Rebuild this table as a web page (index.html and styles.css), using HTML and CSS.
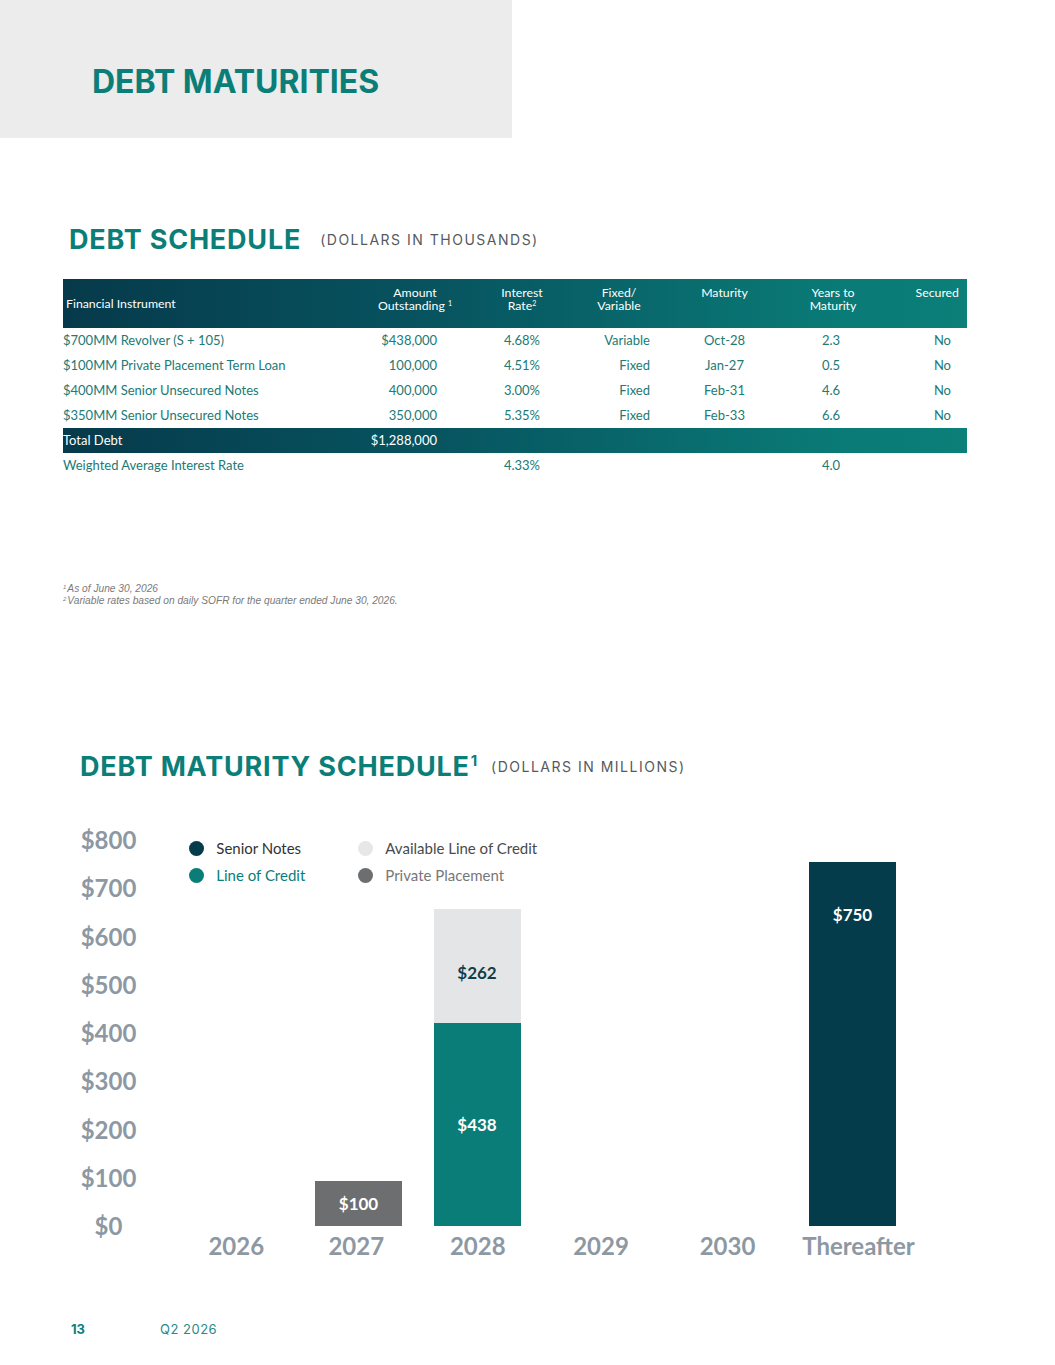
FILE: index.html
```html
<!DOCTYPE html>
<html lang="en">
<head>
<meta charset="utf-8">
<title>Debt Maturities</title>
<link rel="stylesheet" href="styles.css">
</head>
<body>
<header class="hero">
  <h1 class="hero-title">DEBT MATURITIES</h1>
</header>
<main class="page">
  <section class="schedule">
    <div class="section-head">
      <h2 class="section-title">DEBT SCHEDULE</h2>
      <span class="section-unit">(DOLLARS IN THOUSANDS)</span>
    </div>
    <table class="debt-table">
      <colgroup>
        <col class="w-inst"><col class="w-amt"><col class="w-rate"><col class="w-type"><col class="w-mat"><col class="w-yrs"><col class="w-sec">
      </colgroup>
      <thead>
        <tr class="band">
          <th class="h-inst">Financial Instrument</th>
          <th>Amount<br>Outstanding <sup class="h-sup">1</sup></th>
          <th>Interest<br>Rate<sup class="h-sup">2</sup></th>
          <th>Fixed/<br>Variable</th>
          <th>Maturity</th>
          <th>Years to<br>Maturity</th>
          <th class="h-sec">Secured</th>
        </tr>
      </thead>
      <tbody>
        <tr>
          <td class="d-inst">$700MM Revolver (S + 105)</td>
          <td class="d-amt">$438,000</td>
          <td class="d-rate">4.68%</td>
          <td class="d-type">Variable</td>
          <td class="d-mat">Oct-28</td>
          <td class="d-yrs">2.3</td>
          <td class="d-sec">No</td>
        </tr>
        <tr>
          <td class="d-inst">$100MM Private Placement Term Loan</td>
          <td class="d-amt">100,000</td>
          <td class="d-rate">4.51%</td>
          <td class="d-type">Fixed</td>
          <td class="d-mat">Jan-27</td>
          <td class="d-yrs">0.5</td>
          <td class="d-sec">No</td>
        </tr>
        <tr>
          <td class="d-inst">$400MM Senior Unsecured Notes</td>
          <td class="d-amt">400,000</td>
          <td class="d-rate">3.00%</td>
          <td class="d-type">Fixed</td>
          <td class="d-mat">Feb-31</td>
          <td class="d-yrs">4.6</td>
          <td class="d-sec">No</td>
        </tr>
        <tr>
          <td class="d-inst">$350MM Senior Unsecured Notes</td>
          <td class="d-amt">350,000</td>
          <td class="d-rate">5.35%</td>
          <td class="d-type">Fixed</td>
          <td class="d-mat">Feb-33</td>
          <td class="d-yrs">6.6</td>
          <td class="d-sec">No</td>
        </tr>
        <tr class="band total">
          <td class="d-inst">Total Debt</td>
          <td class="d-amt">$1,288,000</td>
          <td class="d-rate"></td>
          <td class="d-type"></td>
          <td class="d-mat"></td>
          <td class="d-yrs"></td>
          <td class="d-sec"></td>
        </tr>
        <tr>
          <td class="d-inst">Weighted Average Interest Rate</td>
          <td class="d-amt"></td>
          <td class="d-rate">4.33%</td>
          <td class="d-type"></td>
          <td class="d-mat"></td>
          <td class="d-yrs">4.0</td>
          <td class="d-sec"></td>
        </tr>
      </tbody>
    </table>
    <div class="footnotes">
      <p class="note"><sup class="note-sup">1</sup>As of June 30, 2026</p>
      <p class="note"><sup class="note-sup">2</sup>Variable rates based on daily SOFR for the quarter ended June 30, 2026.</p>
    </div>
  </section>

  <section class="maturity">
    <div class="section-head chart-head">
      <h2 class="section-title">DEBT MATURITY SCHEDULE<sup class="title-sup">1</sup></h2>
      <span class="section-unit">(DOLLARS IN MILLIONS)</span>
    </div>
    <div class="chart">
      <div class="y-axis">
        <span class="tick">$800</span>
        <span class="tick">$700</span>
        <span class="tick">$600</span>
        <span class="tick">$500</span>
        <span class="tick">$400</span>
        <span class="tick">$300</span>
        <span class="tick">$200</span>
        <span class="tick">$100</span>
        <span class="tick">$0</span>
      </div>
      <div class="plot">
        <ul class="legend">
          <li class="key"><span class="dot dot-senior"></span><span class="key-senior">Senior Notes</span></li>
          <li class="key"><span class="dot dot-avail"></span><span class="key-avail">Available Line of Credit</span></li>
          <li class="key"><span class="dot dot-loc"></span><span class="key-loc">Line of Credit</span></li>
          <li class="key"><span class="dot dot-pp"></span><span class="key-pp">Private Placement</span></li>
        </ul>
        <div class="col">
          <div class="slot"></div>
          <div class="xlabel">2026</div>
        </div>
        <div class="col">
          <div class="slot">
            <div class="bar bar-pp">
              <div class="seg seg-pp" style="height:45px">$100</div>
            </div>
          </div>
          <div class="xlabel">2027</div>
        </div>
        <div class="col">
          <div class="slot">
            <div class="bar">
              <div class="seg seg-avail" style="height:114px">$262</div>
              <div class="seg seg-loc" style="height:203px">$438</div>
            </div>
          </div>
          <div class="xlabel">2028</div>
        </div>
        <div class="col">
          <div class="slot"></div>
          <div class="xlabel">2029</div>
        </div>
        <div class="col">
          <div class="slot"></div>
          <div class="xlabel">2030</div>
        </div>
        <div class="col">
          <div class="slot">
            <div class="bar">
              <div class="seg seg-senior" style="height:364px">$750</div>
            </div>
          </div>
          <div class="xlabel">Thereafter</div>
        </div>
      </div>
    </div>
  </section>
</main>
<footer class="footer">
  <span class="page-num">13</span>
  <span class="period">Q2 2026</span>
</footer>
</body>
</html>
```

FILE: styles.css
```css
html, body {
  margin: 0;
  padding: 0;
  background: #ffffff;
}

body {
  width: 1055px;
  font-family: Lato, "Liberation Sans", sans-serif;
  color: #267b76;
}

/* ---------- hero band ---------- */
.hero {
  width: 512px;
  height: 138px;
  box-sizing: border-box;
  padding: 66px 0 0 92px;
  background: #ebeceb;
}

.hero-title {
  margin: 0;
  font-family: Inter, "Liberation Sans", sans-serif;
  font-weight: 700;
  font-size: 32px;
  line-height: 32px;
  color: #0b7e78;
}

/* ---------- section headings ---------- */
.section-head {
  display: flex;
  align-items: center;
  gap: 19px;
  margin: 88px 0 26px 69px;
}

.section-title {
  margin: 0;
  font-family: Inter, "Liberation Sans", sans-serif;
  font-weight: 700;
  font-size: 27px;
  line-height: 27px;
  letter-spacing: 0.8px;
  color: #0b7e78;
}

.section-unit {
  font-family: Inter, "Liberation Sans", sans-serif;
  font-weight: 400;
  font-size: 14px;
  line-height: 14px;
  letter-spacing: 1.5px;
  color: #555a5c;
}

.title-sup {
  font-size: 15px;
  line-height: 0;
  vertical-align: 10px;
  margin-left: 1px;
}

/* ---------- table ---------- */
.debt-table {
  margin-left: 63px;
  width: 904px;
  border-collapse: collapse;
  border-spacing: 0;
  table-layout: fixed;
}

.w-inst { width: 307px; }
.w-amt  { width: 90px; }
.w-rate { width: 124px; }
.w-type { width: 70px; }
.w-mat  { width: 141px; }
.w-yrs  { width: 76px; }
.w-sec  { width: 96px; }

.band {
  background: linear-gradient(90deg, #063a4b 0%, #07535f 40%, #0a7a76 85%, #0b7f79 100%);
}

.debt-table th {
  height: 49px;
  box-sizing: border-box;
  padding: 7px 0 0 0;
  vertical-align: top;
  text-align: center;
  font-weight: 400;
  font-size: 12.3px;
  line-height: 13px;
  color: #ffffff;
}

.debt-table th.h-inst {
  padding: 0 0 0 3px;
  vertical-align: middle;
  text-align: left;
}

.debt-table th.h-sec {
  text-align: right;
  padding-right: 8px;
}

.h-sup {
  font-size: 7px;
  line-height: 0;
  vertical-align: 4px;
}

.debt-table td {
  height: 25px;
  padding: 0;
  font-size: 13px;
  line-height: 25px;
  color: #217a75;
  white-space: nowrap;
}

.debt-table .total td {
  color: #ffffff;
}

.d-inst { text-align: left; }
.d-amt  { text-align: right; padding-right: 23px !important; }
.d-rate { text-align: right; padding-right: 44px !important; }
.d-type { text-align: right; padding-right: 4px !important; }
.d-mat  { text-align: center; }
.d-yrs  { text-align: center; padding-right: 4px !important; }
.d-sec  { text-align: right; padding-right: 16px !important; }

/* ---------- footnotes ---------- */
.footnotes {
  margin: 105px 0 0 63px;
}

.note {
  margin: 0;
  font-family: "Liberation Sans", Arial, sans-serif;
  font-style: italic;
  font-size: 10.2px;
  line-height: 12px;
  color: #7a7a7a;
}

.note-sup {
  font-size: 6px;
  line-height: 0;
  vertical-align: 3px;
  margin-right: 1px;
}

/* ---------- chart ---------- */
.chart-head {
  gap: 13px;
  margin: 146px 0 36px 80px;
}

.chart {
  display: grid;
  grid-template-columns: 77px auto;
  column-gap: 29.5px;
  margin-left: 70px;
}

.y-axis {
  display: flex;
  flex-direction: column;
}

.tick {
  height: 48.25px;
  line-height: 48.25px;
  text-align: center;
  font-weight: 700;
  font-size: 24px;
  color: #8d98a2;
}

.plot {
  position: relative;
  display: grid;
  grid-template-columns: 119.5px 120.5px 122.5px 124px 129px 133px;
}

.col {
  display: flex;
  flex-direction: column;
}

.slot {
  height: 410px;
  display: flex;
  align-items: flex-end;
}

.xlabel {
  height: 40px;
  line-height: 40px;
  text-align: center;
  font-weight: 700;
  font-size: 24px;
  color: #8d98a2;
}

.bar {
  width: 87px;
  margin-left: 17px;
  display: flex;
  flex-direction: column;
}

.bar-pp {
  margin-left: 19px;
}

.seg {
  box-sizing: border-box;
  display: flex;
  align-items: center;
  justify-content: center;
  font-weight: 700;
  font-size: 17px;
  line-height: 20px;
  color: #ffffff;
}

.seg-pp { background: #6d6e70; }
.seg-loc { background: #0a7d78; }
.seg-avail {
  background: #e4e5e6;
  color: #123d4b;
  padding-top: 14px;
}
.seg-senior {
  background: #053c4c;
  align-items: flex-start;
  padding-top: 43px;
}

/* legend */
.legend {
  position: absolute;
  top: 18.5px;
  left: 12.8px;
  margin: 0;
  padding: 0;
  list-style: none;
  display: grid;
  grid-template-columns: 169px auto;
  grid-auto-rows: 27px;
}

.key {
  display: flex;
  align-items: center;
  gap: 12px;
  font-size: 15px;
  line-height: 18px;
}

.dot {
  width: 15px;
  height: 15px;
  border-radius: 50%;
  flex: none;
}

.dot-senior { background: #053c4c; }
.dot-loc { background: #0a7d78; }
.dot-avail { background: #e6e7e8; }
.dot-pp { background: #6d6e70; }

.key-senior { color: #333333; }
.key-loc { color: #0a7d78; }
.key-avail { color: #4a4a4a; }
.key-pp { color: #777777; }

/* ---------- footer ---------- */
.footer {
  display: flex;
  align-items: center;
  gap: 75px;
  margin: 55px 0 0 71px;
  height: 16px;
}

.page-num {
  font-family: Inter, "Liberation Sans", sans-serif;
  font-weight: 700;
  font-size: 13px;
  line-height: 16px;
  color: #0b7e78;
}

.period {
  font-family: Inter, "Liberation Sans", sans-serif;
  font-weight: 400;
  font-size: 13px;
  line-height: 16px;
  letter-spacing: 0.5px;
  color: #2a8a85;
}
```
